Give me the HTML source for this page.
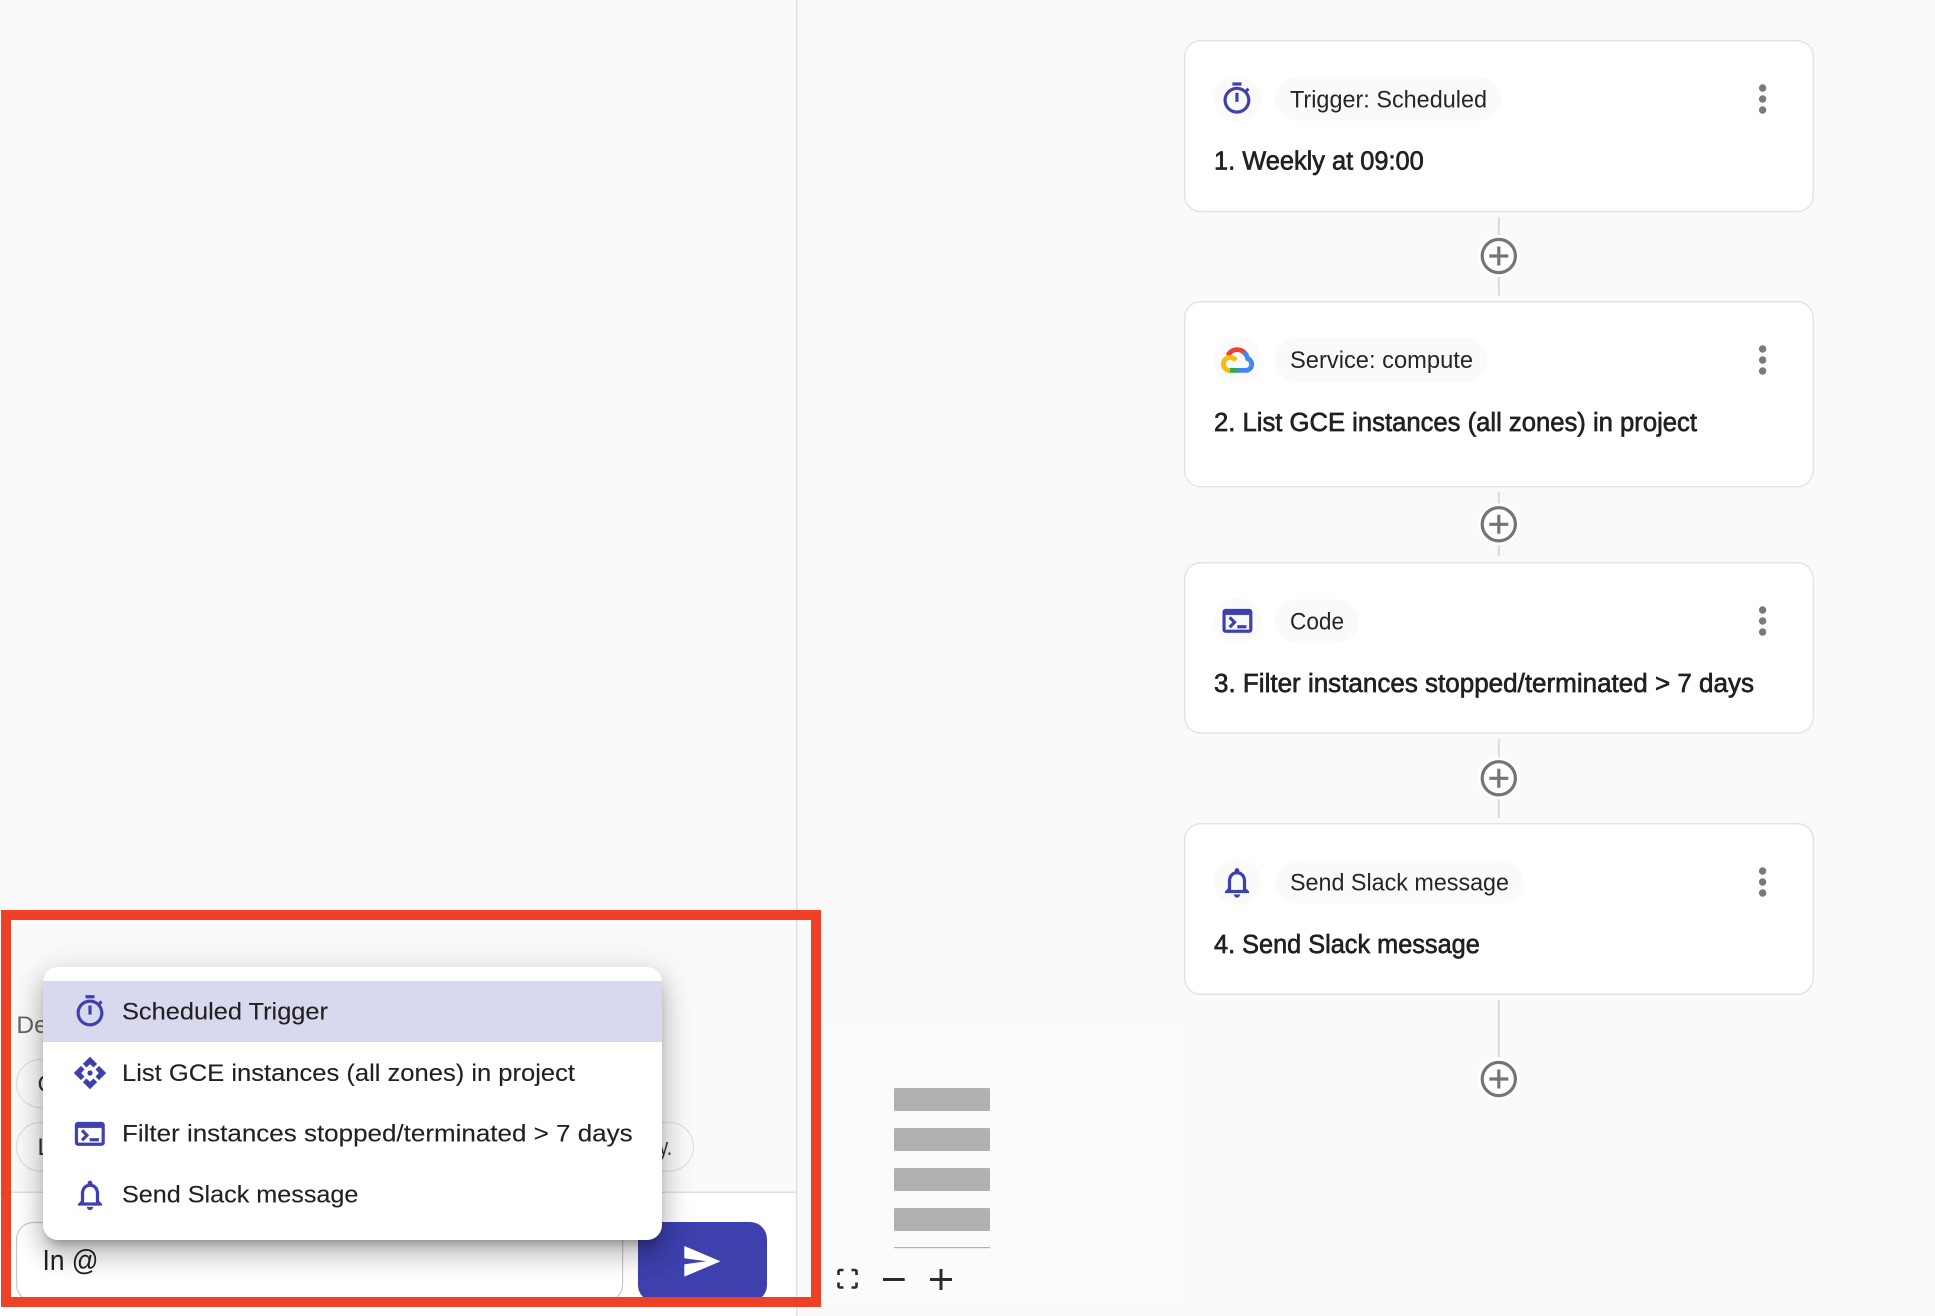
<!DOCTYPE html>
<html lang="en">
<head>
<meta charset="utf-8">
<title>Workflow editor</title>
<style>
html,body{margin:0;padding:0;width:1935px;height:1316px;overflow:hidden;background:#fafafa}
body{position:relative;font-family:"Liberation Sans",sans-serif}
svg{position:absolute;left:0;top:0;display:block}
svg text{font-family:"Liberation Sans",sans-serif}
.pop{position:absolute;left:43px;top:967px;width:619px;height:273px;background:#fff;border-radius:15px;overflow:hidden;box-shadow:0 8px 10px -5px rgba(0,0,0,.28),0 16px 24px 2px rgba(0,0,0,.16),0 6px 30px 5px rgba(0,0,0,.13)}
.sel{position:absolute;left:0;top:14px;width:619px;height:61px;background:#d8d9ee}
.title{font-size:25.5px;fill:#212121;stroke:#212121;stroke-width:.65px}
.chip{font-size:24px;fill:#262626}
.item{font-size:24.5px;fill:#212121;stroke:#212121;stroke-width:.12px}
</style>
</head>
<body>
<svg width="1935" height="1316" viewBox="0 0 1935 1316" style="z-index:1">
  <!-- panels -->
  <rect x="0" y="1192" width="796" height="124" fill="#fff"/>
  <rect x="0" y="1191.5" width="796" height="1.5" fill="#e0e0e0"/>
  <rect x="796" y="0" width="1.5" height="1316" fill="#e0e0e0"/>

  <!-- minimap -->
  <rect x="824" y="1030" width="359" height="273" fill="#fbfbfb"/>
  <g fill="#b1b1b1">
    <rect x="894" y="1088" width="96" height="23" rx="1.5"/>
    <rect x="894" y="1128" width="96" height="23" rx="1.5"/>
    <rect x="894" y="1168" width="96" height="23" rx="1.5"/>
    <rect x="894" y="1208" width="96" height="23" rx="1.5"/>
    <rect x="894" y="1247" width="96" height="1.2"/>
  </g>
  <g fill="none" stroke="#2b2b2b" stroke-width="2.6">
    <path d="M838.5 1275v-3.5a1.5 1.5 0 0 1 1.5-1.5h3.5M851.5 1270h3.5a1.5 1.5 0 0 1 1.5 1.5v3.5M856.5 1282.5v3.5a1.5 1.5 0 0 1-1.5 1.5h-3.5M843.5 1287.5h-3.5a1.5 1.5 0 0 1-1.5-1.5v-3.5"/>
    <path stroke-width="3" d="M883 1279.5h21.7M930 1279.5h22M941 1269v21"/>
  </g>

  <!-- left panel under popup -->
  <text x="16.4" y="1033" font-size="24.5" fill="#666">Describe</text>
  <rect x="16.5" y="1059.5" width="640" height="48" rx="24" fill="#fafafa" stroke="#e0e0e0" stroke-width="1.2"/>
  <text x="37.5" y="1092" font-size="24" fill="#333">C</text>
  <rect x="16.5" y="1122.5" width="677" height="48.5" rx="24" fill="#fafafa" stroke="#e0e0e0" stroke-width="1.2"/>
  <text x="37.5" y="1155" font-size="24" fill="#333">L</text>
  <text x="659" y="1155" font-size="24" fill="#333" textLength="13" lengthAdjust="spacingAndGlyphs">y.</text>

  <!-- input and send -->
  <rect x="16.6" y="1222.5" width="606" height="79" rx="17" fill="#fff" stroke="#c9c9c9" stroke-width="1.2"/>
  <text x="42.5" y="1270" font-size="29" fill="#212121" textLength="56" lengthAdjust="spacingAndGlyphs">In @</text>
  <rect x="638" y="1222" width="129" height="80" rx="17" fill="#3d40ad"/>
  <path transform="translate(680.9 1240.9) scale(1.7)" fill="#fff" stroke="#fff" stroke-width=".6" stroke-linejoin="round" d="M2.3 20.6 22.6 12 2.3 3.4 2.3 10l15 2-15 2z"/>

  <!-- connectors -->
  <g fill="#d9d9d9">
    <rect x="1497.8" y="217" width="2" height="78.5"/>
    <rect x="1497.8" y="492" width="2" height="64"/>
    <rect x="1497.8" y="739" width="2" height="79"/>
    <rect x="1497.8" y="1000" width="2" height="57"/>
  </g>
  <g>
    <circle cx="1498.8" cy="256" r="21" fill="#fff"/>
    <circle cx="1498.8" cy="524.3" r="21" fill="#fff"/>
    <circle cx="1498.8" cy="778.3" r="21" fill="#fff"/>
    <circle cx="1498.8" cy="1079" r="21" fill="#fff"/>
  </g>
  <g fill="none" stroke="#757575" stroke-width="3.2">
    <circle cx="1498.8" cy="256" r="16.6"/><path d="M1489.3 256h19M1498.8 246.5v19"/>
    <circle cx="1498.8" cy="524.3" r="16.6"/><path d="M1489.3 524.3h19M1498.8 514.8v19"/>
    <circle cx="1498.8" cy="778.3" r="16.6"/><path d="M1489.3 778.3h19M1498.8 768.8v19"/>
    <circle cx="1498.8" cy="1079" r="16.6"/><path d="M1489.3 1079h19M1498.8 1069.5v19"/>
  </g>

  <!-- cards -->
  <g fill="#fff" stroke="#e4e4e4" stroke-width="1.5">
    <rect x="1184.7" y="40.7" width="628.6" height="170.8" rx="16"/>
    <rect x="1184.7" y="301.7" width="628.6" height="185" rx="16"/>
    <rect x="1184.7" y="562.7" width="628.6" height="170.4" rx="16"/>
    <rect x="1184.7" y="823.7" width="628.6" height="170.6" rx="16"/>
  </g>
  <g fill="#fafafa">
    <ellipse cx="1237.5" cy="99" rx="23.5" ry="23"/><rect x="1275" y="77.3" width="226" height="43.4" rx="21.7"/>
    <ellipse cx="1237.5" cy="360" rx="23.5" ry="23"/><rect x="1275" y="338.3" width="212.7" height="43.4" rx="21.7"/>
    <ellipse cx="1237.5" cy="621" rx="23.5" ry="23"/><rect x="1275" y="599.3" width="83.5" height="43.4" rx="21.7"/>
    <ellipse cx="1237.5" cy="882" rx="23.5" ry="23"/><rect x="1275" y="860.3" width="248.5" height="43.4" rx="21.7"/>
  </g>

  <path fill="#3d40ad" stroke="#3d40ad" stroke-width=".15" transform="translate(1219.2 81) scale(1.48)" d="M15 1H9v2h6V1zm-4 13h2V8h-2v6zm8.03-6.61 1.42-1.42c-.43-.51-.9-.99-1.41-1.41l-1.42 1.42C16.07 4.74 14.12 4 12 4c-4.97 0-9 4.03-9 9s4.02 9 9 9 9-4.03 9-9c0-2.12-.74-4.07-1.97-5.61zM12 20c-3.87 0-7-3.13-7-7s3.13-7 7-7 7 3.13 7 7-3.13 7-7 7z"/>
  <g fill="none" stroke-width="4.8">
    <path stroke="#ea4335" d="M1228 355.5C1230 351.5 1233.5 349.6 1237 349.6C1240.5 349.6 1243.7 351 1245.8 354.5"/>
    <path stroke="#4285f4" d="M1243.6 351.8C1246 353.8 1247.2 356 1247.7 358.6A6.1 6.1 0 0 1 1245 370.4H1237"/>
    <path stroke="#34a853" d="M1237 370.4H1228.5"/>
    <path stroke="#fbbc05" d="M1230 370.4A6.5 6.5 0 0 1 1223.4 363.8A6.6 6.6 0 0 1 1230 357.4C1232.4 357.4 1234.3 358.5 1235.6 360.4"/>
  </g>
  <path fill="#3d40ad" stroke="#3d40ad" stroke-width=".15" transform="translate(1219.6 603) scale(1.485)" d="M20 4H4c-1.11 0-2 .9-2 2v12c0 1.1.89 2 2 2h16c1.1 0 2-.9 2-2V6c0-1.1-.9-2-2-2zm0 14H4V8h16v10zm-2-1h-6v-2h6v2zM7.5 17l-1.41-1.41L8.67 13l-2.59-2.59L7.5 9l4 4-4 4z"/>
  <path fill="#3d40ad" stroke="#3d40ad" stroke-width=".15" transform="translate(1219 864.5) scale(1.5)" d="M12 22c1.1 0 2-.9 2-2h-4c0 1.1.9 2 2 2zm6-6v-5c0-3.07-1.63-5.64-4.5-6.32V4c0-.83-.67-1.5-1.5-1.5s-1.5.67-1.5 1.5v.68C7.64 5.36 6 7.92 6 11v5l-2 2v1h16v-1l-2-2zm-2 1H8v-6c0-2.48 1.51-4.5 4-4.5s4 2.02 4 4.5v6z"/>

  <g>
    <text class="chip" x="1290" y="107.5" textLength="197" lengthAdjust="spacingAndGlyphs">Trigger: Scheduled</text>
    <text class="chip" x="1290" y="368" textLength="183" lengthAdjust="spacingAndGlyphs">Service: compute</text>
    <text class="chip" x="1290" y="629.5" textLength="54" lengthAdjust="spacingAndGlyphs">Code</text>
    <text class="chip" x="1290" y="890.5" textLength="219" lengthAdjust="spacingAndGlyphs">Send Slack message</text>
  </g>
  <text class="title" x="1214" y="169.5" textLength="209.8" lengthAdjust="spacingAndGlyphs">1. Weekly at 09:00</text>
  <text class="title" x="1214" y="431" textLength="483" lengthAdjust="spacingAndGlyphs">2. List GCE instances (all zones) in project</text>
  <text class="title" x="1214" y="692" textLength="540" lengthAdjust="spacingAndGlyphs">3. Filter instances stopped/terminated &gt; 7 days</text>
  <text class="title" x="1214" y="953" textLength="265.8" lengthAdjust="spacingAndGlyphs">4. Send Slack message</text>

  <g fill="#7a7a7a">
    <circle cx="1762.6" cy="88" r="3.7"/><circle cx="1762.6" cy="99" r="3.7"/><circle cx="1762.6" cy="110" r="3.7"/>
    <circle cx="1762.6" cy="349" r="3.7"/><circle cx="1762.6" cy="360" r="3.7"/><circle cx="1762.6" cy="371" r="3.7"/>
    <circle cx="1762.6" cy="610" r="3.7"/><circle cx="1762.6" cy="621" r="3.7"/><circle cx="1762.6" cy="632" r="3.7"/>
    <circle cx="1762.6" cy="871" r="3.7"/><circle cx="1762.6" cy="882" r="3.7"/><circle cx="1762.6" cy="893" r="3.7"/>
  </g>
</svg>

<div class="pop" style="z-index:2"><div class="sel"></div></div>

<svg width="1935" height="1316" viewBox="0 0 1935 1316" style="z-index:3">
  <path fill="#3d40ad" stroke="#3d40ad" stroke-width=".15" transform="translate(72.24 993.76) scale(1.48)" d="M15 1H9v2h6V1zm-4 13h2V8h-2v6zm8.03-6.61 1.42-1.42c-.43-.51-.9-.99-1.41-1.41l-1.42 1.42C16.07 4.74 14.12 4 12 4c-4.97 0-9 4.03-9 9s4.02 9 9 9 9-4.03 9-9c0-2.12-.74-4.07-1.97-5.61zM12 20c-3.87 0-7-3.13-7-7s3.13-7 7-7 7 3.13 7 7-3.13 7-7 7z"/>
  <g fill="#3d40ad" transform="translate(70.56 1053.56) scale(1.62)">
    <path d="M12 2 16.4 6.4 14.2 8.6 12 6.6 9.8 8.6 7.6 6.4z"/>
    <path d="M22 12 17.6 16.4 15.4 14.2 17.4 12 15.4 9.8 17.6 7.6z"/>
    <path d="M12 22 7.6 17.6 9.8 15.4 12 17.4 14.2 15.4 16.4 17.6z"/>
    <path d="M2 12 6.4 7.6 8.6 9.8 6.6 12 8.6 14.2 6.4 16.4z"/>
    <circle cx="12" cy="12" r="1.6"/>
  </g>
  <path fill="#3d40ad" stroke="#3d40ad" stroke-width=".15" transform="translate(72 1116) scale(1.485)" d="M20 4H4c-1.11 0-2 .9-2 2v12c0 1.1.89 2 2 2h16c1.1 0 2-.9 2-2V6c0-1.1-.9-2-2-2zm0 14H4V8h16v10zm-2-1h-6v-2h6v2zM7.5 17l-1.41-1.41L8.67 13l-2.59-2.59L7.5 9l4 4-4 4z"/>
  <path fill="#3d40ad" stroke="#3d40ad" stroke-width=".15" transform="translate(72 1177) scale(1.5)" d="M12 22c1.1 0 2-.9 2-2h-4c0 1.1.9 2 2 2zm6-6v-5c0-3.07-1.63-5.64-4.5-6.32V4c0-.83-.67-1.5-1.5-1.5s-1.5.67-1.5 1.5v.68C7.64 5.36 6 7.92 6 11v5l-2 2v1h16v-1l-2-2zm-2 1H8v-6c0-2.48 1.51-4.5 4-4.5s4 2.02 4 4.5v6z"/>

  <text class="item" x="122" y="1019.5" textLength="206" lengthAdjust="spacingAndGlyphs">Scheduled Trigger</text>
  <text class="item" x="122" y="1081" textLength="453" lengthAdjust="spacingAndGlyphs">List GCE instances (all zones) in project</text>
  <text class="item" x="122" y="1141.7" textLength="510.6" lengthAdjust="spacingAndGlyphs">Filter instances stopped/terminated &gt; 7 days</text>
  <text class="item" x="122" y="1202.7" textLength="236.4" lengthAdjust="spacingAndGlyphs">Send Slack message</text>

  <!-- red highlight -->
  <rect x="6" y="915" width="810" height="387" fill="none" stroke="#ee4126" stroke-width="10"/>
</svg>
</body>
</html>
